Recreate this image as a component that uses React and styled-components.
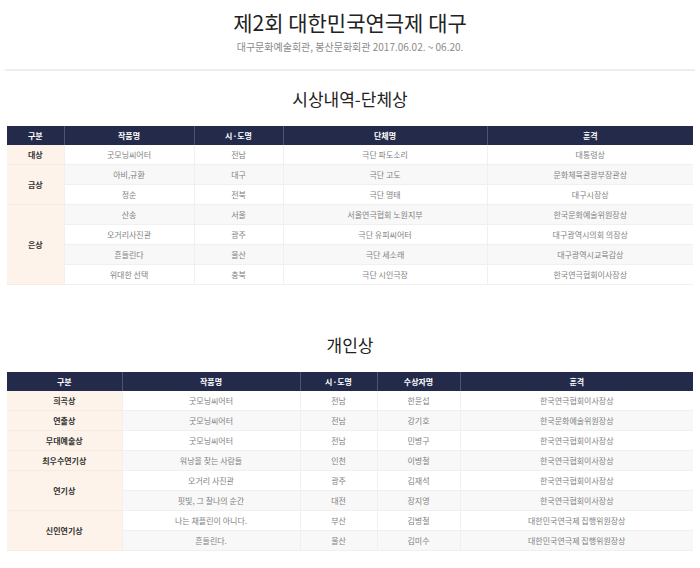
import React from 'react';
import styled, { createGlobalStyle } from 'styled-components';

const GlobalStyle = createGlobalStyle`
  body {
    margin: 0;
    background: #fff;
    font-family: "Noto Sans CJK KR", "Noto Sans", sans-serif;
  }
`;

const groupAwards = [
  { cat: '대상', rows: [['굿모닝씨어터', '전남', '극단 파도소리', '대통령상']] },
  {
    cat: '금상',
    rows: [
      ['아비,규환', '대구', '극단 고도', '문화체육관광부장관상'],
      ['정순', '전북', '극단 명태', '대구시장상'],
    ],
  },
  {
    cat: '은상',
    rows: [
      ['산송', '서울', '서울연극협회 노원지부', '한국문화예술위원장상'],
      ['오거리사진관', '광주', '극단 유피씨어터', '대구광역시의회 의장상'],
      ['흔들린다', '울산', '극단 세소래', '대구광역시교육감상'],
      ['위대한 선택', '충북', '극단 시인극장', '한국연극협회이사장상'],
    ],
  },
];

const personAwards = [
  { cat: '희곡상', rows: [['굿모닝씨어터', '전남', '한윤섭', '한국연극협회이사장상']] },
  { cat: '연출상', rows: [['굿모닝씨어터', '전남', '강기호', '한국문화예술위원장상']] },
  { cat: '무대예술상', rows: [['굿모닝씨어터', '전남', '민병구', '한국연극협회이사장상']] },
  { cat: '최우수연기상', rows: [['워낭을 찾는 사람들', '인천', '이병철', '한국연극협회이사장상']] },
  {
    cat: '연기상',
    rows: [
      ['오거리 사진관', '광주', '김재석', '한국연극협회이사장상'],
      ['핏빛, 그 찰나의 순간', '대전', '장지영', '한국연극협회이사장상'],
    ],
  },
  {
    cat: '신인연기상',
    rows: [
      ['나는 채플린이 아니다.', '부산', '김병철', '대한민국연극제 집행위원장상'],
      ['흔들린다.', '울산', '김미수', '대한민국연극제 집행위원장상'],
    ],
  },
];

const AwardTable = ({ heads, widths, groups }) => {
  let idx = 0;
  return (
    <Table>
      <colgroup>
        {widths.map((w, i) => (
          <col key={i} style={{ width: w }} />
        ))}
      </colgroup>
      <thead>
        <tr>
          {heads.map((h) => (
            <HeadCell key={h}>{h}</HeadCell>
          ))}
        </tr>
      </thead>
      <tbody>
        {groups.map((g) =>
          g.rows.map((r, j) => {
            const alt = idx++ % 2 === 1;
            return (
              <tr key={g.cat + j}>
                {j === 0 && <CatCell rowSpan={g.rows.length}>{g.cat}</CatCell>}
                {r.map((c, k) => (
                  <Cell key={k} $alt={alt}>
                    {c}
                  </Cell>
                ))}
              </tr>
            );
          })
        )}
      </tbody>
    </Table>
  );
};

const App = () => (
  <Page>
    <GlobalStyle />
    <Header>
      <Title>제2회 대한민국연극제 대구</Title>
      <Sub>대구문화예술회관, 봉산문화회관 2017.06.02. ~ 06.20.</Sub>
    </Header>
    <Section>
      <SectionTitle>시상내역-단체상</SectionTitle>
      <AwardTable
        heads={['구분', '작품명', '시·도명', '단체명', '훈격']}
        widths={[57, 130, 89, 204, 206]}
        groups={groupAwards}
      />
    </Section>
    <Section $gap={48}>
      <SectionTitle>개인상</SectionTitle>
      <AwardTable
        heads={['구분', '작품명', '시·도명', '수상자명', '훈격']}
        widths={[115, 178, 77, 83, 233]}
        groups={personAwards}
      />
    </Section>
  </Page>
);

export default App;

const Page = styled.div`
  width: 700px;
  padding: 8px 7px 0;
  box-sizing: border-box;
`;

const Header = styled.header`
  text-align: center;
  padding-bottom: 14px;
  border-bottom: 2px solid #eeeeee;
  margin: 0 -2px;
`;

const Title = styled.h1`
  margin: 0;
  font-size: 21px;
  line-height: 28px;
  font-weight: 400;
  color: #222;
`;

const Sub = styled.p`
  margin: 3px 0 0;
  font-size: 10px;
  line-height: 16px;
  color: #8a8a8a;
`;

const Section = styled.section`
  margin-top: ${(p) => p.$gap || 16}px;
`;

const SectionTitle = styled.h2`
  margin: 0 0 15px;
  text-align: center;
  font-size: 17px;
  line-height: 24px;
  font-weight: 400;
  color: #222;
`;

const Table = styled.table`
  width: 686px;
  border-collapse: collapse;
  table-layout: fixed;
  font-size: 8px;
`;

const HeadCell = styled.th`
  height: 19px;
  padding: 0;
  background: #232a4a;
  color: #fff;
  font-weight: 700;
  border-left: 1px solid #4d5472;
  &:first-child {
    border-left: none;
  }
`;

const Cell = styled.td`
  height: 19px;
  padding: 0;
  text-align: center;
  color: #828282;
  background: ${(p) => (p.$alt ? '#f8f8f8' : '#fff')};
  border-bottom: 1px solid #f0f0f0;
  border-left: 1px solid #f0f0f0;
`;

const CatCell = styled.td`
  padding: 0;
  text-align: center;
  font-weight: 700;
  color: #333;
  background: #fdf3ea;
  border-bottom: 1px solid #f6ebe0;
`;
